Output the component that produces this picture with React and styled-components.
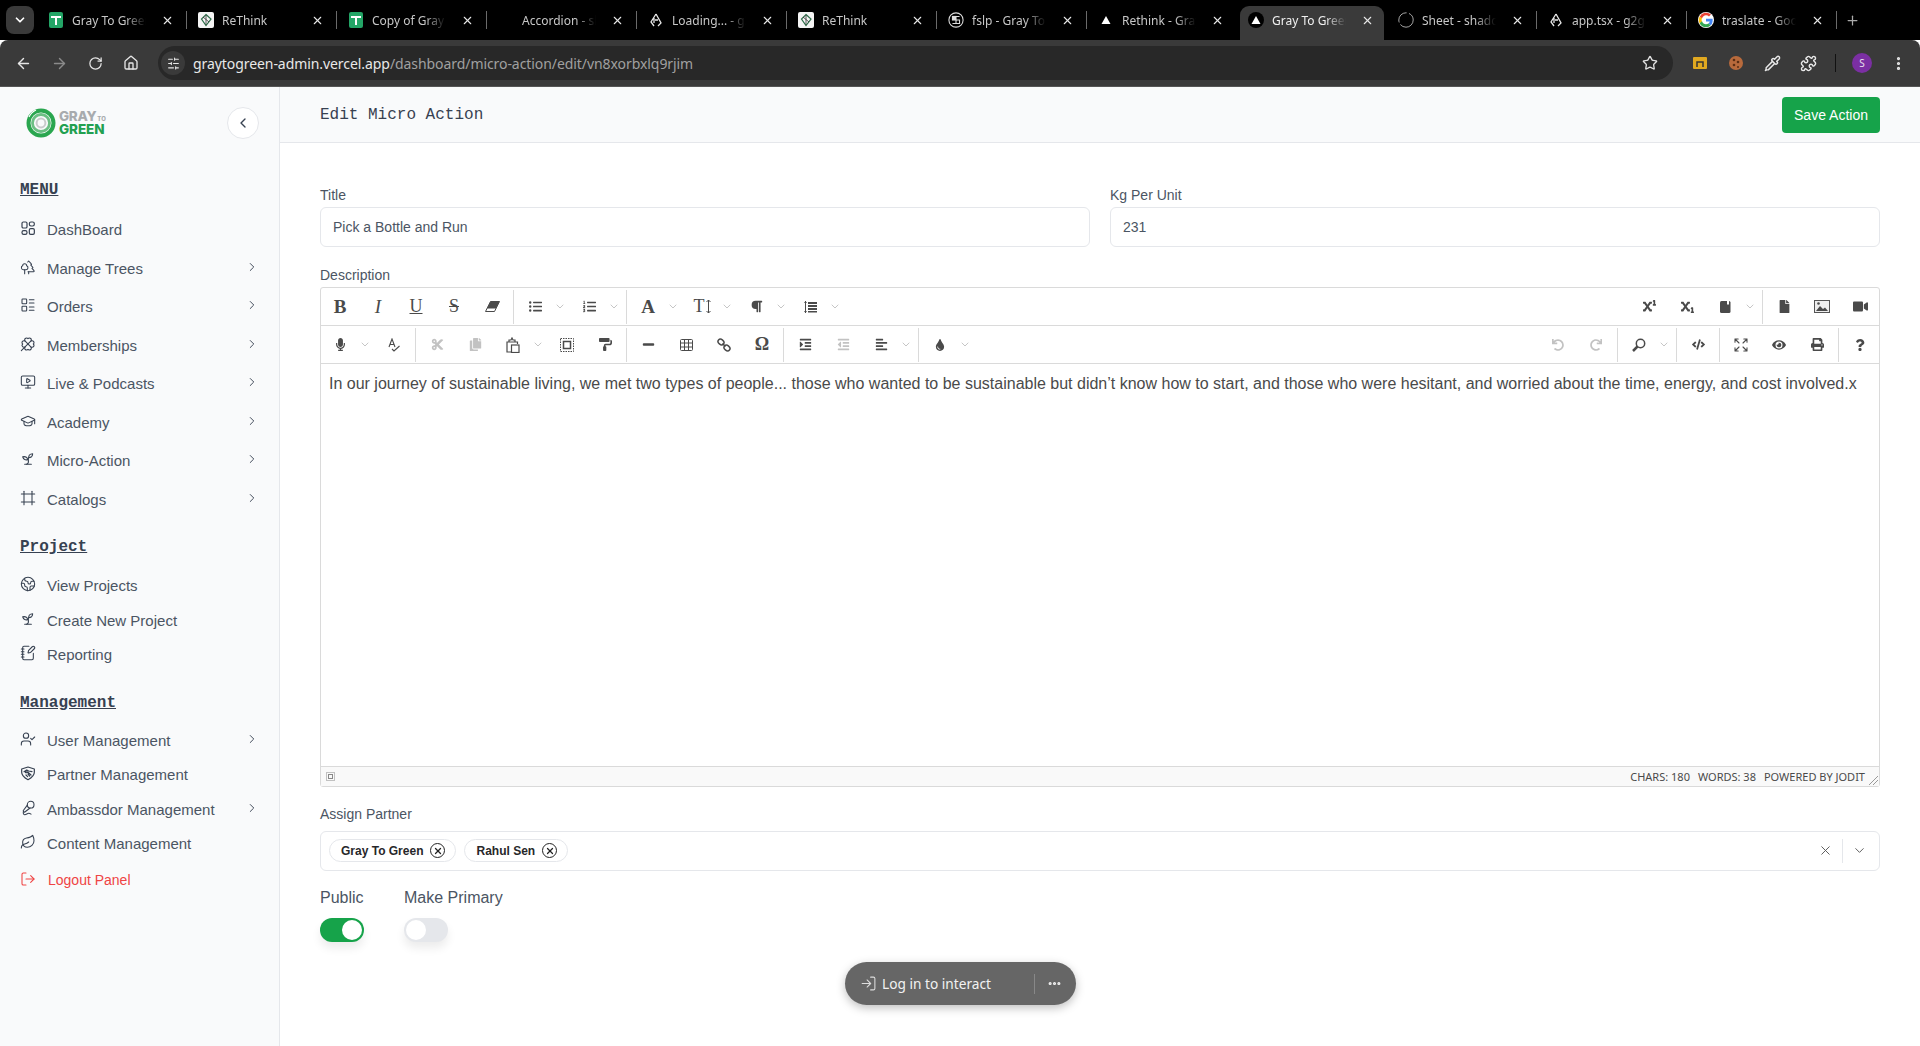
import React from "react";
import styled, { createGlobalStyle } from "styled-components";
import {
  LuTrees, LuLayoutList, LuClover, LuMonitorPlay, LuGraduationCap, LuSprout, LuFrame,
  LuEarth, LuNotebookPen, LuUserCheck, LuMicVocal, LuLeaf, LuLogOut,
  LuChevronRight, LuChevronLeft, LuChevronDown, LuX, LuArrowLeft, LuArrowRight, LuRotateCw,
  LuHouse, LuStar, LuPuzzle, LuEllipsisVertical, LuEllipsis, LuLogIn, LuSlidersHorizontal, LuPlus, LuPipette, LuExpand,
} from "react-icons/lu";
import {
  FaListUl, FaListOl, FaParagraph, FaMicrophone, FaCut, FaCopy, FaPaintRoller,
  FaMinus, FaFile, FaVideo, FaUndo, FaRedo, FaCode,
  FaEye, FaPrint, FaQuestion, FaIndent, FaOutdent, FaAlignLeft, FaTint, FaSuperscript,
  FaSubscript,
} from "react-icons/fa";

const Global = createGlobalStyle`
  html, body { margin: 0; height: 100%; overflow: hidden; background: #fff; }
  body { font-family: "Liberation Sans", Arial, sans-serif; }
  * { box-sizing: border-box; }
`;

const Page = styled.div`display:flex;flex-direction:column;height:1046px;width:1920px;position:relative;overflow:hidden;`;
const TabStrip = styled.div`display:flex;align-items:flex-end;height:40px;background:#000;padding-left:6px;font-family:"Noto Sans","Open Sans",sans-serif;`;
const TabSearch = styled.div`width:28px;height:28px;margin:0 3px 6px 0;border-radius:8px;background:#3a3a3a;color:#fff;display:flex;align-items:center;justify-content:center;`;
const Tab = styled.div`
  position:relative;height:34px;display:flex;align-items:center;gap:8px;font-size:12px;padding-bottom:6px;
  width:${p => p.$active ? 144 : 150}px;
  margin:${p => p.$active ? "0 3px" : "0"};
  padding-left:${p => p.$active ? 8 : 11}px;
  padding-right:${p => p.$active ? 10 : 13}px;
  color:${p => p.$active ? "#f0f0f0" : "#c7c7c7"};
  background:${p => p.$active ? "#3a3a3a" : "transparent"};
  border-radius:9px 9px 0 0;
  ${p => p.$sep ? `&::after{content:"";position:absolute;right:0;top:5px;height:18px;width:1px;background:#6a6a6a;}` : ""}
`;
const TabIcon = styled.span`width:16px;height:16px;flex:none;display:flex;align-items:center;justify-content:center;`;
const TabTitle = styled.span`flex:1;margin-right:6px;white-space:nowrap;overflow:hidden;-webkit-mask-image:linear-gradient(90deg,#000 72%,transparent);mask-image:linear-gradient(90deg,#000 72%,transparent);`;
const TabClose = styled.span`width:14px;height:14px;color:#e8e8e8;display:flex;align-items:center;justify-content:center;flex:none;`;
const NewTab = styled.div`color:#aaa;display:flex;align-items:center;padding:0 0 12px 8px;`;

const Bar = styled.div`height:47px;background:#3a3a3a;border-bottom:1px solid #555;display:flex;align-items:center;padding:0 0 0 5px;border-radius:8px 8px 0 0;`;
const NavBtn = styled.div`width:36px;height:24px;display:flex;align-items:center;justify-content:center;color:${p => p.$dim ? "#8a8a8a" : "#e6e6e6"};`;
const Address = styled.div`flex:none;width:1515px;height:34px;margin-left:9px;background:#282828;border-radius:17px;display:flex;align-items:center;padding:0 15px 0 3px;font-family:"Noto Sans","Open Sans",sans-serif;font-size:14px;letter-spacing:-.07px;`;
const SiteIcon = styled.div`width:24px;height:24px;border-radius:50%;background:#3a3a3a;display:flex;align-items:center;justify-content:center;color:#e6e6e6;margin-right:8px;`;
const Host = styled.span`color:#e8e8e8;`;
const UrlPath = styled.span`color:#a0a0a0;flex:1;`;
const ExtRow = styled.div`display:flex;align-items:center;margin-left:9px;`;
const Ext = styled.div`width:36px;height:24px;display:flex;align-items:center;justify-content:center;color:#e8e8e8;`;
const BarDivider = styled.div`width:1px;height:18px;background:#111;margin:0 9px;`;
const Avatar = styled.div`width:20px;height:20px;border-radius:50%;background:#7b2fa3;color:#e8e0ee;font:10px "Noto Sans",sans-serif;display:flex;align-items:center;justify-content:center;margin:0 8px 0 7px;`;

const Body = styled.div`flex:1;display:flex;min-height:0;`;
const Side = styled.aside`width:280px;flex:none;background:#f9fafb;border-right:1px solid #e5e7eb;padding:0 20px;color:#4b5563;`;
const SideHead = styled.div`height:72px;display:flex;align-items:center;justify-content:space-between;padding:0 0 0 6px;`;
const Logo = styled.div`display:flex;align-items:center;gap:3px;`;
const LogoText = styled.div`display:flex;flex-direction:column;font-family:"Inter",sans-serif;font-weight:800;line-height:11px;`;
const LogoGray = styled.span`font-size:13.5px;color:#a8abae;letter-spacing:-.3px;`;
const LogoTo = styled.span`font-size:6px;margin-left:1px;letter-spacing:0;`;
const LogoGreen = styled.span`font-size:13.5px;color:#22a050;letter-spacing:-.1px;`;
const Collapse = styled.div`width:32px;height:32px;border-radius:50%;background:#fff;border:1px solid #e5e7eb;display:flex;align-items:center;justify-content:center;color:#374151;`;
const Heading = styled.h3`margin:${p => p.$mt}px 0 ${p => p.$mb}px;height:24px;font:bold 16px/24px "Liberation Mono",monospace;color:#374151;text-decoration:underline;`;
const Item = styled.div`height:${p => p.$h}px;display:flex;align-items:center;gap:${p => p.$red ? 12 : 11}px;font-size:${p => p.$red ? 14 : 15}px;color:${p => p.$red ? "#ef4444" : "#4b5563"};padding-top:1px;`;
const ItemIcon = styled.span`width:16px;height:16px;flex:none;display:flex;margin-top:-3px;color:${p => p.$red ? "#ef4444" : "#374151"};`;
const ItemLabel = styled.span`flex:1;`;
const ItemChev = styled.span`display:flex;margin-top:-3px;color:#374151;`;

const Main = styled.main`flex:1;min-width:0;display:flex;flex-direction:column;`;
const Top = styled.header`height:56px;flex:none;background:#f9fafb;border-bottom:1px solid #e5e7eb;display:flex;align-items:center;justify-content:space-between;padding:0 40px;`;
const TopTitle = styled.h1`margin:0;font:400 16px "Liberation Mono",monospace;color:#374151;`;
const SaveBtn = styled.button`width:98px;height:36px;background:#16a34a;color:#fff;border:0;border-radius:4px;font:14px "Liberation Sans",sans-serif;`;
const Form = styled.div`padding:42px 40px 0;`;
const Cols = styled.div`display:grid;grid-template-columns:1fr 1fr;gap:20px;margin-bottom:18px;`;
const Label = styled.div`height:20px;line-height:20px;font-size:14px;color:#4b5563;margin-bottom:${p => p.$mb ?? 2}px;`;
const Input = styled.div`height:40px;border:1px solid #e5e7eb;border-radius:6px;padding:0 12px;display:flex;align-items:center;font-size:14px;color:#4b5563;`;
const Editor = styled.div`border:1px solid #dadada;border-radius:3px;height:500px;display:flex;flex-direction:column;margin-bottom:17px;position:relative;`;
const Row = styled.div`height:38px;flex:none;display:flex;align-items:center;border-bottom:1px solid #dadada;`;
const Spacer = styled.div`flex:1;`;
const TBtn = styled.div`width:38px;height:38px;display:flex;align-items:center;justify-content:center;color:${p => p.$off ? "#c2c2c2" : "#4a4a4a"};flex:none;`;
const Chev = styled.div`width:16px;height:38px;padding-right:4px;display:flex;align-items:center;justify-content:center;color:#a0a0a0;flex:none;`;
const Sep = styled.div`width:1px;height:34px;margin:0 2px;background:#dadada;flex:none;`;
const SerifGlyph = styled.span`font:${p => p.$i ? "italic" : "normal"} ${p => p.$b ? "bold" : "normal"} ${p => p.$s || 16}px "Liberation Serif",serif;text-decoration:${p => p.$d || "none"};color:#4a4a4a;display:flex;align-items:center;gap:1px;`;
const Content = styled.div`flex:1;padding:8px 8px;font-size:16px;line-height:24px;color:#4a4a4a;white-space:nowrap;overflow:hidden;`;
const Status = styled.div`height:20px;flex:none;background:#f9f9f9;border-top:1px solid #dadada;display:flex;align-items:center;justify-content:space-between;padding:0 14px 0 5px;font:11px "Noto Sans","Open Sans",sans-serif;text-transform:uppercase;color:#4a4a4a;`;
const StatusRight = styled.div`display:flex;gap:8px;`;
const Resize = styled.svg`position:absolute;right:0;bottom:0;`;
const Select = styled.div`height:40px;border:1px solid #e5e7eb;border-radius:6px;display:flex;align-items:center;padding:0 4px 1px 8px;gap:8px;margin-bottom:17px;`;
const Chip = styled.div`height:23px;border:1px solid #e5e7eb;border-radius:12px;padding:0 10px 0 11px;display:flex;align-items:center;gap:7px;font-size:12px;font-weight:bold;color:#27272a;`;
const ChipX = styled.span`width:15px;height:15px;border:1.5px solid #222;border-radius:50%;display:flex;align-items:center;justify-content:center;color:#222;`;
const SelectEnd = styled.div`margin-left:auto;display:flex;align-items:center;color:#555;`;
const SelectClear = styled.span`display:flex;padding-right:9px;border-right:1px solid #e5e7eb;height:24px;align-items:center;`;
const SelectOpen = styled.span`display:flex;padding:0 8px 0 9px;`;
const Toggles = styled.div`display:flex;gap:40px;`;
const ToggleCol = styled.div`display:flex;flex-direction:column;align-items:flex-start;`;
const ToggleLabel = styled.div`height:20px;line-height:20px;font-size:16px;color:#4b5563;margin-bottom:10px;`;
const Track = styled.div`width:44px;height:24px;border-radius:12px;padding:2px;display:flex;justify-content:${p => p.$on ? "flex-end" : "flex-start"};background:${p => p.$on ? "#16a34a" : "#e5e7eb"};box-shadow:0 6px 10px rgba(0,0,0,.08);`;
const Knob = styled.div`width:20px;height:20px;border-radius:50%;background:#fff;`;
const Pill = styled.div`position:absolute;left:845px;top:962px;width:231px;height:43px;border-radius:22px;background:#666;box-shadow:0 3px 10px rgba(0,0,0,.25);display:flex;align-items:center;padding:0 14px 0 15px;color:#f2f2f2;font:13.7px "Noto Sans","Open Sans",sans-serif;`;
const PillIcon = styled.span`display:flex;margin-right:5px;color:#ddd;`;
const PillText = styled.span`flex:1;`;
const PillSep = styled.span`width:1px;height:20px;background:#888;margin-right:12px;`;

const Sheets = () => <svg width="16" height="16" viewBox="0 0 16 16"><rect x="1" width="14" height="16" rx="2" fill="#23a566"/><path d="M3 5h10M8 5v8" stroke="#fff" strokeWidth="2"/></svg>;
const Rethink = () => <svg width="16" height="16" viewBox="0 0 16 16"><rect width="16" height="16" rx="2" fill="#f4f4f4"/><path d="M8 2.5 13 7l-5 6.5L3.5 7Z" fill="none" stroke="#2c6e49" strokeWidth="1.2"/><path d="M5 5l6 5M8 3v10" stroke="#333" strokeWidth=".8"/></svg>;
const Tri = ({ round }) => <svg width="16" height="16" viewBox="0 0 16 16">{round && <circle cx="8" cy="8" r="8" fill="#000"/>}<path d="M8 4l4.5 8h-9z" fill="#fff"/></svg>;
const G2g = () => <svg width="16" height="16" viewBox="0 0 16 16" fill="none" stroke="#e8e8e8" strokeWidth="1.3"><path d="M8 2 3 10l3 4M8 2l5 9-3 3M7 8h3M6 6v5"/></svg>;
const Fslp = () => <svg width="18" height="18" viewBox="0 0 18 18" fill="none" stroke="#ddd" strokeWidth="1.2"><circle cx="9" cy="9" r="8"/><rect x="5" y="5" width="4" height="4" fill="#ddd"/><path d="M9 9h4v4H9zM9 5h4M5 13h4"/></svg>;
const Spinner = () => <svg width="20" height="20" viewBox="0 0 20 20" fill="none" stroke="#aaa" strokeWidth="1.2"><circle cx="10" cy="10" r="9" strokeDasharray="22 3 18 3"/></svg>;
const GoogleG = () => <svg width="16" height="16" viewBox="0 0 48 48"><circle cx="24" cy="24" r="24" fill="#fff"/><path fill="#EA4335" d="M24 10c3.5 0 6.5 1.2 9 3.4l6-6A22 22 0 0 0 5 14l7 5.500C13.700 14 18.400 10 24 10z"/><path fill="#4285F4" d="M44 24.500c0-1.500-.1-3-.4-4.500H24v8.500h11.300a10 10 0 0 1-4.200 6.300l6.800 5.300C42 36.300 44 30.900 44 24.500z"/><path fill="#FBBC05" d="M12 29a12 12 0 0 1 0-10l-7-5.500a22 22 0 0 0 0 20.900z"/><path fill="#34A853" d="M24 46c5.900 0 10.900-2 14-5.900l-6.800-5.300c-1.900 1.300-4.300 2.100-7.200 2.100-5.600 0-10.300-3.800-12-9l-7 5.500A22 22 0 0 0 24 46z"/></svg>;
const tabs = [
  [<Sheets />, "Gray To Green"], [<Rethink />, "ReThink"], [<Sheets />, "Copy of Gray To"], [null, "Accordion - shadcn"],
  [<G2g />, "Loading... - g2g"], [<Rethink />, "ReThink"], [<Fslp />, "fslp - Gray To Green"], [<Tri />, "Rethink - Gray To"],
  [<Tri round />, "Gray To Green"], [<Spinner />, "Sheet - shadcn"], [<G2g />, "app.tsx - g2g"], [<GoogleG />, "traslate - Google"],
];

const Dash = () => <svg width="16" height="16" viewBox="0 0 24 24" fill="none" stroke="currentColor" strokeWidth="1.8"><rect x="3" y="3" width="7.500" height="9" rx="2"/><rect x="14" y="3" width="7.500" height="6" rx="2.500"/><rect x="14" y="13" width="7.500" height="8.500" rx="2"/><rect x="3" y="16" width="7.500" height="5.500" rx="2.500"/></svg>;
const ShieldHands = () => <svg width="16" height="16" viewBox="0 0 24 24" fill="none" stroke="currentColor" strokeWidth="1.8" strokeLinejoin="round" strokeLinecap="round"><path d="M2.500 6 12 3l9.500 3v5c0 5-4.500 8.500-9.500 11-5-2.500-9.500-6-9.500-11z"/><path d="M6 10l4-2.500 3 1.500 5 1M10.500 7.500 8 11c1 1 2.500.5 3.500-.5l5 4.500M9 15l2.500 2.500M12 13.500l2.500 3"/></svg>;
const ic = (C) => <C size={16} strokeWidth={1.6} />;
const menu = [
  [<Dash />, "DashBoard"], [ic(LuTrees), "Manage Trees", 1], [ic(LuLayoutList), "Orders", 1], [ic(LuClover), "Memberships", 1],
  [ic(LuMonitorPlay), "Live & Podcasts", 1], [ic(LuGraduationCap), "Academy", 1], [ic(LuSprout), "Micro-Action", 1], [ic(LuFrame), "Catalogs", 1],
];
const project = [[ic(LuEarth), "View Projects"], [ic(LuSprout), "Create New Project"], [ic(LuNotebookPen), "Reporting"]];
const mgmt = [[ic(LuUserCheck), "User Management", 1], [<ShieldHands />, "Partner Management"], [ic(LuMicVocal), "Ambassdor Management", 1], [ic(LuLeaf), "Content Management"]];

const NavItem = ({ icon, label, chev, h }) => (
  <Item $h={h}>
    <ItemIcon>{icon}</ItemIcon>
    <ItemLabel>{label}</ItemLabel>
    {chev && <ItemChev><LuChevronRight size={14} strokeWidth={1.6} /></ItemChev>}
  </Item>
);
const Btn = ({ children, off }) => <TBtn $off={off}>{children}</TBtn>;
const Dn = () => <Chev><LuChevronDown size={13} strokeWidth={1.2} /></Chev>;
const FA = { size: 13 };

const Eraser = () => <svg width="15" height="11" viewBox="0 0 15 11"><path d="M5.500 0.500H14.500L9.500 10.500H0.500Z" fill="#fff" stroke="#4a4a4a"/><path d="M5.500 0.500H14.500L11 7.500H2Z" fill="#4a4a4a"/></svg>;
const TextSize = () => <SerifGlyph $s={18}>T<svg width="5" height="13" viewBox="0 0 5 13" fill="none" stroke="#4a4a4a"><path d="M2.500 0v13M.5 2l2-2 2 2M.5 11l2 2 2-2"/></svg></SerifGlyph>;
const LineHeight = () => <svg width="13" height="12" viewBox="0 0 13 12" fill="#4a4a4a"><path d="M1.500 0v12" stroke="#4a4a4a"/><path d="M0 2l1.500-2L3 2zM0 10l1.500 2L3 10z"/><rect x="4" y="1" width="9" height="2"/><rect x="4" y="4" width="9" height="2"/><rect x="4" y="7" width="9" height="2"/><rect x="4" y="10" width="9" height="1.500"/></svg>;
const Spell = () => <svg width="13" height="14" viewBox="0 0 13 14" fill="none" stroke="#4a4a4a" strokeWidth="1.100"><path d="M1 9 4 1l3 8M2 6.500h4M4 11l2 2 5.500-5"/></svg>;
const Paste = () => <svg width="14" height="16" viewBox="0 0 14 16" fill="none" stroke="#4a4a4a" strokeWidth="1.200"><path d="M4 5H1v10h4M9 5h2.500v2M3 5V3h2l1-2 1 2h2v2z"/><rect x="5.500" y="8" width="7.500" height="7.500" fill="#fff"/></svg>;
const SelectAll = () => <svg width="14" height="14" viewBox="0 0 14 14"><rect x=".5" y=".5" width="13" height="13" fill="none" stroke="#4a4a4a" strokeDasharray="1.500 1"/><rect x="3.500" y="3.500" width="7" height="7" fill="none" stroke="#4a4a4a" strokeWidth="1.500"/></svg>;
const ChainLink = () => <svg width="14" height="14" viewBox="0 0 14 14" fill="none" stroke="#4a4a4a" strokeWidth="1.500"><ellipse cx="4" cy="4" rx="3.200" ry="2.500" transform="rotate(40 4 4)"/><ellipse cx="10" cy="10" rx="3.200" ry="2.500" transform="rotate(40 10 10)"/><path d="M5.500 5.500l3 3"/></svg>;
const Grid = () => <svg width="13" height="12" viewBox="0 0 13 12" fill="none" stroke="#4a4a4a"><rect x=".5" y=".5" width="12" height="11" rx="1"/><path d="M.5 4h12M.5 8h12M4.500.5v11M8.500.5v11"/></svg>;
const Book = () => <svg width="11" height="12" viewBox="0 0 11 12"><rect width="10.500" height="12" rx="1.500" fill="#4a4a4a"/><path d="M7 0h2v4l-1-1-1 1z" fill="#fff"/></svg>;
const Pic = () => <svg width="16" height="13" viewBox="0 0 16 13"><rect x=".5" y=".5" width="15" height="12" fill="#eee" stroke="#555"/><path d="M2 11l4-5 3 3 2-1.500L14 11z" fill="#4a4a4a"/><circle cx="4.500" cy="3.500" r="1.300" fill="#4a4a4a"/></svg>;
const Finder = () => <svg width="14" height="14" viewBox="0 0 14 14" fill="none" stroke="#4a4a4a"><circle cx="8.500" cy="5.500" r="4.200" strokeWidth="1.500"/><path d="M5.500 8.500 1 13" strokeWidth="2.500"/></svg>;

const Swirl = () => (
  <svg width="30" height="30" viewBox="0 0 30 30" fill="none">
    <circle cx="15" cy="15" r="12.500" stroke="#2aa64f" strokeWidth="4"/>
    <circle cx="15" cy="15" r="8.500" stroke="#6cbf84" strokeWidth="2.800"/>
    <circle cx="15" cy="15" r="4.400" stroke="#c9cbcc" strokeWidth="2"/>
    <path d="M3 9A14 14 0 0 1 10 2" stroke="#fff" strokeWidth="1.200"/>
  </svg>
);

export default function App() {
  return (
    <Page>
      <Global />
      <TabStrip>
        <TabSearch><LuChevronDown size={14} strokeWidth={3} /></TabSearch>
        {tabs.map(([icon, title], i) => (
          <Tab key={i} $active={i === 8} $sep={i !== 7 && i !== 8}>
            <TabIcon>{icon}</TabIcon>
            <TabTitle>{title}</TabTitle>
            <TabClose><LuX size={13} strokeWidth={2} /></TabClose>
          </Tab>
        ))}
        <NewTab><LuPlus size={15} /></NewTab>
      </TabStrip>
      <Bar>
        <NavBtn><LuArrowLeft size={17} strokeWidth={2} /></NavBtn>
        <NavBtn $dim><LuArrowRight size={17} strokeWidth={2} /></NavBtn>
        <NavBtn><LuRotateCw size={15} strokeWidth={2} /></NavBtn>
        <NavBtn><LuHouse size={16} strokeWidth={2} /></NavBtn>
        <Address>
          <SiteIcon><LuSlidersHorizontal size={13} /></SiteIcon>
          <Host>graytogreen-admin.vercel.app</Host>
          <UrlPath>/dashboard/micro-action/edit/vn8xorbxlq9rjim</UrlPath>
          <LuStar size={16} color="#e0e0e0" />
        </Address>
        <ExtRow>
          <Ext><svg width="14" height="12" viewBox="0 0 14 12"><rect width="14" height="12" rx="1" fill="#e0a820"/><path d="M4 10V5h6v5" stroke="#333" fill="none" strokeWidth="1.500"/></svg></Ext>
          <Ext><svg width="16" height="16" viewBox="0 0 16 16"><circle cx="8" cy="8" r="7" fill="#b86a3c"/><circle cx="6" cy="5" r="1.300" fill="#5b2e14"/><circle cx="10" cy="7" r="1.300" fill="#5b2e14"/><circle cx="6" cy="10" r="1.300" fill="#5b2e14"/><circle cx="10" cy="12" r="1" fill="#5b2e14"/></svg></Ext>
          <Ext><LuPipette size={17} strokeWidth={2} /></Ext>
          <Ext><LuPuzzle size={17} strokeWidth={2} /></Ext>
          <BarDivider />
          <Avatar>S</Avatar>
          <Ext><LuEllipsisVertical size={17} strokeWidth={2.5} /></Ext>
        </ExtRow>
      </Bar>
      <Body>
        <Side>
          <SideHead>
            <Logo>
              <Swirl />
              <LogoText>
                <LogoGray>GRAY<LogoTo>TO</LogoTo></LogoGray>
                <LogoGreen>GREEN</LogoGreen>
              </LogoText>
            </Logo>
            <Collapse><LuChevronLeft size={16} strokeWidth={2} /></Collapse>
          </SideHead>
          <Heading $mt={19} $mb={8}>MENU</Heading>
          {menu.map(([i, l, c]) => <NavItem key={l} icon={i} label={l} chev={c} h={38.5} />)}
          <Heading $mt={17} $mb={9}>Project</Heading>
          {project.map(([i, l, c]) => <NavItem key={l} icon={i} label={l} chev={c} h={34.500} />)}
          <Heading $mt={19} $mb={8}>Management</Heading>
          {mgmt.map(([i, l, c]) => <NavItem key={l} icon={i} label={l} chev={c} h={34.500} />)}
          <Item $h={38} $red>
            <ItemIcon $red><LuLogOut size={16} strokeWidth={1.6} /></ItemIcon>
            <ItemLabel>Logout Panel</ItemLabel>
          </Item>
        </Side>
        <Main>
          <Top>
            <TopTitle>Edit Micro Action</TopTitle>
            <SaveBtn>Save Action</SaveBtn>
          </Top>
          <Form>
            <Cols>
              <div><Label>Title</Label><Input>Pick a Bottle and Run</Input></div>
              <div><Label>Kg Per Unit</Label><Input>231</Input></div>
            </Cols>
            <Label>Description</Label>
            <Editor>
              <Row>
                <Btn><SerifGlyph $b $s={19}>B</SerifGlyph></Btn>
                <Btn><SerifGlyph $i $s={19}>I</SerifGlyph></Btn>
                <Btn><SerifGlyph $s={18} $d="underline">U</SerifGlyph></Btn>
                <Btn><SerifGlyph $s={18} $d="line-through">S</SerifGlyph></Btn>
                <Btn><Eraser /></Btn>
                <Sep />
                <Btn><FaListUl {...FA} /></Btn><Dn />
                <Btn><FaListOl {...FA} /></Btn><Dn />
                <Sep />
                <Btn><SerifGlyph $b $s={19}>A</SerifGlyph></Btn><Dn />
                <Btn><TextSize /></Btn><Dn />
                <Btn><FaParagraph size={13} /></Btn><Dn />
                <Btn><LineHeight /></Btn><Dn />
                <Spacer />
                <Btn><FaSuperscript {...FA} /></Btn>
                <Btn><FaSubscript {...FA} /></Btn>
                <Btn><Book /></Btn><Dn />
                <Sep />
                <Btn><FaFile {...FA} /></Btn>
                <Btn><Pic /></Btn>
                <Btn><FaVideo size={15} /></Btn>
              </Row>
              <Row>
                <Btn><FaMicrophone {...FA} /></Btn><Dn />
                <Btn><Spell /></Btn>
                <Sep />
                <Btn off><FaCut {...FA} /></Btn>
                <Btn off><FaCopy {...FA} /></Btn>
                <Btn><Paste /></Btn><Dn />
                <Btn><SelectAll /></Btn>
                <Btn><FaPaintRoller {...FA} /></Btn>
                <Sep />
                <Btn><FaMinus {...FA} /></Btn>
                <Btn><Grid /></Btn>
                <Btn><ChainLink /></Btn>
                <Btn><SerifGlyph $b $s={18}>Ω</SerifGlyph></Btn>
                <Sep />
                <Btn><FaIndent {...FA} /></Btn>
                <Btn off><FaOutdent {...FA} /></Btn>
                <Btn><FaAlignLeft {...FA} /></Btn><Dn />
                <Sep />
                <Btn><FaTint size={12} /></Btn><Dn />
                <Spacer />
                <Btn off><FaUndo size={12} /></Btn>
                <Btn off><FaRedo size={12} /></Btn>
                <Sep />
                <Btn><Finder /></Btn><Dn />
                <Sep />
                <Btn><FaCode {...FA} /></Btn>
                <Sep />
                <Btn><LuExpand size={16} strokeWidth={1.6} /></Btn>
                <Btn><FaEye size={14} /></Btn>
                <Btn><FaPrint {...FA} /></Btn>
                <Sep />
                <Btn><FaQuestion size={12} /></Btn>
              </Row>
              <Content>In our journey of sustainable living, we met two types of people... those who wanted to be sustainable but didn’t know how to start, and those who were hesitant, and worried about the time, energy, and cost involved.x</Content>
              <Status>
                <svg width="9" height="9" viewBox="0 0 9 9"><rect x=".5" y=".5" width="8" height="8" fill="none" stroke="#888" strokeDasharray="1 1"/><rect x="2.500" y="2.500" width="4" height="4" fill="none" stroke="#888"/></svg>
                <StatusRight><span>Chars: 180</span><span>Words: 38</span><span>Powered by Jodit</span></StatusRight>
              </Status>
              <Resize width="12" height="12" viewBox="0 0 12 12" stroke="#999" strokeWidth="1"><path d="M2 11 11 2M6 11l5-5"/></Resize>
            </Editor>
            <Label $mb={7}>Assign Partner</Label>
            <Select>
              <Chip>Gray To Green<ChipX><LuX size={10} strokeWidth={3} /></ChipX></Chip>
              <Chip>Rahul Sen<ChipX><LuX size={10} strokeWidth={3} /></ChipX></Chip>
              <SelectEnd>
                <SelectClear><LuX size={15} strokeWidth={1.5} /></SelectClear>
                <SelectOpen><LuChevronDown size={15} strokeWidth={1.5} /></SelectOpen>
              </SelectEnd>
            </Select>
            <Toggles>
              <ToggleCol><ToggleLabel>Public</ToggleLabel><Track $on><Knob /></Track></ToggleCol>
              <ToggleCol><ToggleLabel>Make Primary</ToggleLabel><Track><Knob /></Track></ToggleCol>
            </Toggles>
          </Form>
        </Main>
      </Body>
      <Pill>
        <PillIcon><LuLogIn size={17} strokeWidth={1.5} /></PillIcon>
        <PillText>Log in to interact</PillText>
        <PillSep />
        <LuEllipsis size={15} strokeWidth={3} />
      </Pill>
    </Page>
  );
}
